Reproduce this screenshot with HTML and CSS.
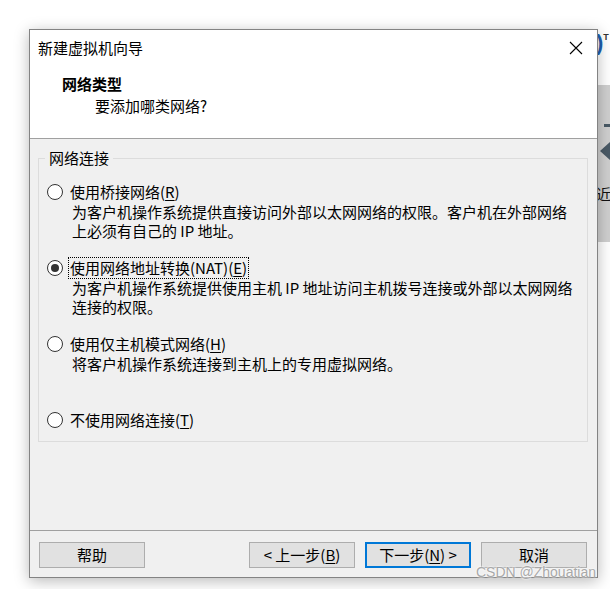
FILE: index.html
```html
<!DOCTYPE html>
<html lang="zh">
<head>
<meta charset="utf-8">
<title>新建虚拟机向导</title>
<link rel="stylesheet" href="styles.css">
</head>
<body>
<div class="desk">
  <div class="behind">
    <div class="behind-logo">)<sup>T</sup></div>
    <div class="behind-panel">
      <span class="bp-dash"></span>
      <span class="bp-tri"></span>
      <span class="bp-text">近</span>
    </div>
  </div>

  <div class="dialog">
    <div class="head">
      <div class="titlebar">
        <span class="title">新建虚拟机向导</span>
        <svg class="close" width="14" height="14" viewBox="0 0 14 14"><path d="M1 1L13 13M13 1L1 13" stroke="#000" stroke-width="1.1" fill="none"/></svg>
      </div>
      <div class="header">
        <div class="h-title">网络类型</div>
        <div class="h-sub">要添加哪类网络?</div>
      </div>
    </div>

    <div class="body">
      <div class="group">
        <span class="legend">网络连接</span>
        <div class="option">
          <div class="opt-line"><span class="radio"></span><span class="label">使用桥接网络(<u>R</u>)</span></div>
          <div class="desc"><div>为客户机操作系统提供直接访问外部以太网网络的权限。客户机在外部网络</div><div>上必须有自己的 IP 地址。</div></div>
        </div>
        <div class="option">
          <div class="opt-line"><span class="radio checked"></span><span class="label focus">使用网络地址转换(NAT)(<u>E</u>)</span></div>
          <div class="desc"><div>为客户机操作系统提供使用主机 IP 地址访问主机拨号连接或外部以太网网络</div><div>连接的权限。</div></div>
        </div>
        <div class="option">
          <div class="opt-line"><span class="radio"></span><span class="label">使用仅主机模式网络(<u>H</u>)</span></div>
          <div class="desc"><div>将客户机操作系统连接到主机上的专用虚拟网络。</div></div>
        </div>
        <div class="option last">
          <div class="opt-line"><span class="radio"></span><span class="label">不使用网络连接(<u>T</u>)</span></div>
        </div>
      </div>
    </div>

    <div class="footer">
      <button class="btn">帮助</button>
      <span class="spacer"></span>
      <button class="btn">&lt; 上一步(<u>B</u>)</button>
      <button class="btn default">下一步(<u>N</u>) &gt;</button>
      <button class="btn">取消</button>
    </div>
  </div>

  <div class="watermark">CSDN @Zhouatian</div>
</div>
</body>
</html>
```
FILE: styles.css
```css
* { box-sizing: border-box; }
html, body { margin: 0; padding: 0; background: #fff; }
body {
  font-family: "Noto Sans CJK SC", "Microsoft YaHei", sans-serif;
  font-size: 15px;
  color: #000;
}
.desk {
  position: relative;
  width: 610px;
  height: 589px;
  overflow: hidden;
  padding: 29px 0 0 29px;
}

/* window behind the dialog */
.behind { position: absolute; left: 560px; top: 0; width: 60px; height: 300px; }
.behind-logo {
  position: absolute; left: 36px; top: 30px;
  color: #1f5fae; font: bold 22px "Liberation Sans", sans-serif;
}
.behind-logo sup { font-size: 9px; color: #333; vertical-align: top; position: relative; top: 2px; }
.behind-panel {
  position: absolute; left: 36px; top: 85px; width: 30px; height: 157px;
  background: #cfcfcf;
}
.bp-dash { position: absolute; left: 8px; top: 39px; width: 8px; height: 3px; background: #4a5a66; }
.bp-tri {
  position: absolute; left: 4px; top: 57px; width: 0; height: 0;
  border-top: 9px solid transparent; border-bottom: 9px solid transparent;
  border-right: 10px solid #4a5a66;
}
.bp-text { position: absolute; left: 0; top: 98px; font-size: 15px; color: #111; }

.dialog {
  position: relative;
  width: 569px;
  height: 549px;
  border: 1px solid #838383;
  background: #f0f0f0;
  box-shadow: 0 3px 14px rgba(0,0,0,0.28);
  display: flex;
  flex-direction: column;
}
.head {
  background: #fff;
  height: 109px;
  border-bottom: 1px solid #a0a0a0;
}
.titlebar {
  height: 36px;
  display: flex;
  align-items: center;
  justify-content: space-between;
  padding: 0 14px 0 8px;
}
.title { font-size: 15px; line-height: 36px; }
.close { display: block; }
.header { padding: 8px 0 0 32px; }
.h-title { font-weight: bold; font-size: 15px; line-height: 20px; }
.h-sub { padding-left: 33px; line-height: 20px; margin-top: 2px; }

.body {
  height: 391px;
  padding: 19px 9px 0 8px;
}
.group {
  position: relative;
  height: 284px;
  border: 1px solid #dcdcdc;
  padding: 23px 0 0 8px;
}
.legend {
  position: absolute;
  left: 6px; top: -11px;
  padding: 0 4px;
  line-height: 20px;
  background: #f0f0f0;
}
.option { height: 76px; }
.option.last { height: 20px; }
.opt-line { display: flex; align-items: center; height: 20px; }
.radio {
  width: 16px; height: 16px;
  border: 1px solid #333;
  border-radius: 50%;
  background: #fff;
  margin-right: 5px;
  position: relative;
  flex: none;
}
.radio.checked::after {
  content: "";
  position: absolute;
  left: 3px; top: 3px;
  width: 8px; height: 8px;
  border-radius: 50%;
  background: #333;
}
.label { line-height: 20px; padding: 0 1px; border: 1px dotted transparent; }
.label.focus { border-color: #000; }
u { text-decoration: underline; text-underline-offset: 2px; }
.desc {
  padding-left: 25px;
  line-height: 19px;
  height: 38px;
  white-space: nowrap;
}
.desc > div { height: 19px; }

.footer {
  flex: 1;
  border-top: 1px solid #a0a0a0;
  display: flex;
  align-items: flex-start;
  padding: 11px 10px 0 9px;
  gap: 10px;
}
.spacer { flex: 1; }
.btn {
  width: 106px;
  height: 26px;
  border: 1px solid #adadad;
  background: #e1e1e1;
  font-family: inherit;
  font-size: 15px;
  color: #000;
  padding: 0;
  line-height: 22px;
}
.btn.default { border: 2px solid #0078d7; }

.watermark {
  position: absolute;
  right: 14px; top: 564px;
  font-family: "Liberation Sans", sans-serif;
  font-size: 14px;
  color: #a8a8a8;
  text-shadow: 0 0 2px #fff, 0 0 2px #fff;
}
```
